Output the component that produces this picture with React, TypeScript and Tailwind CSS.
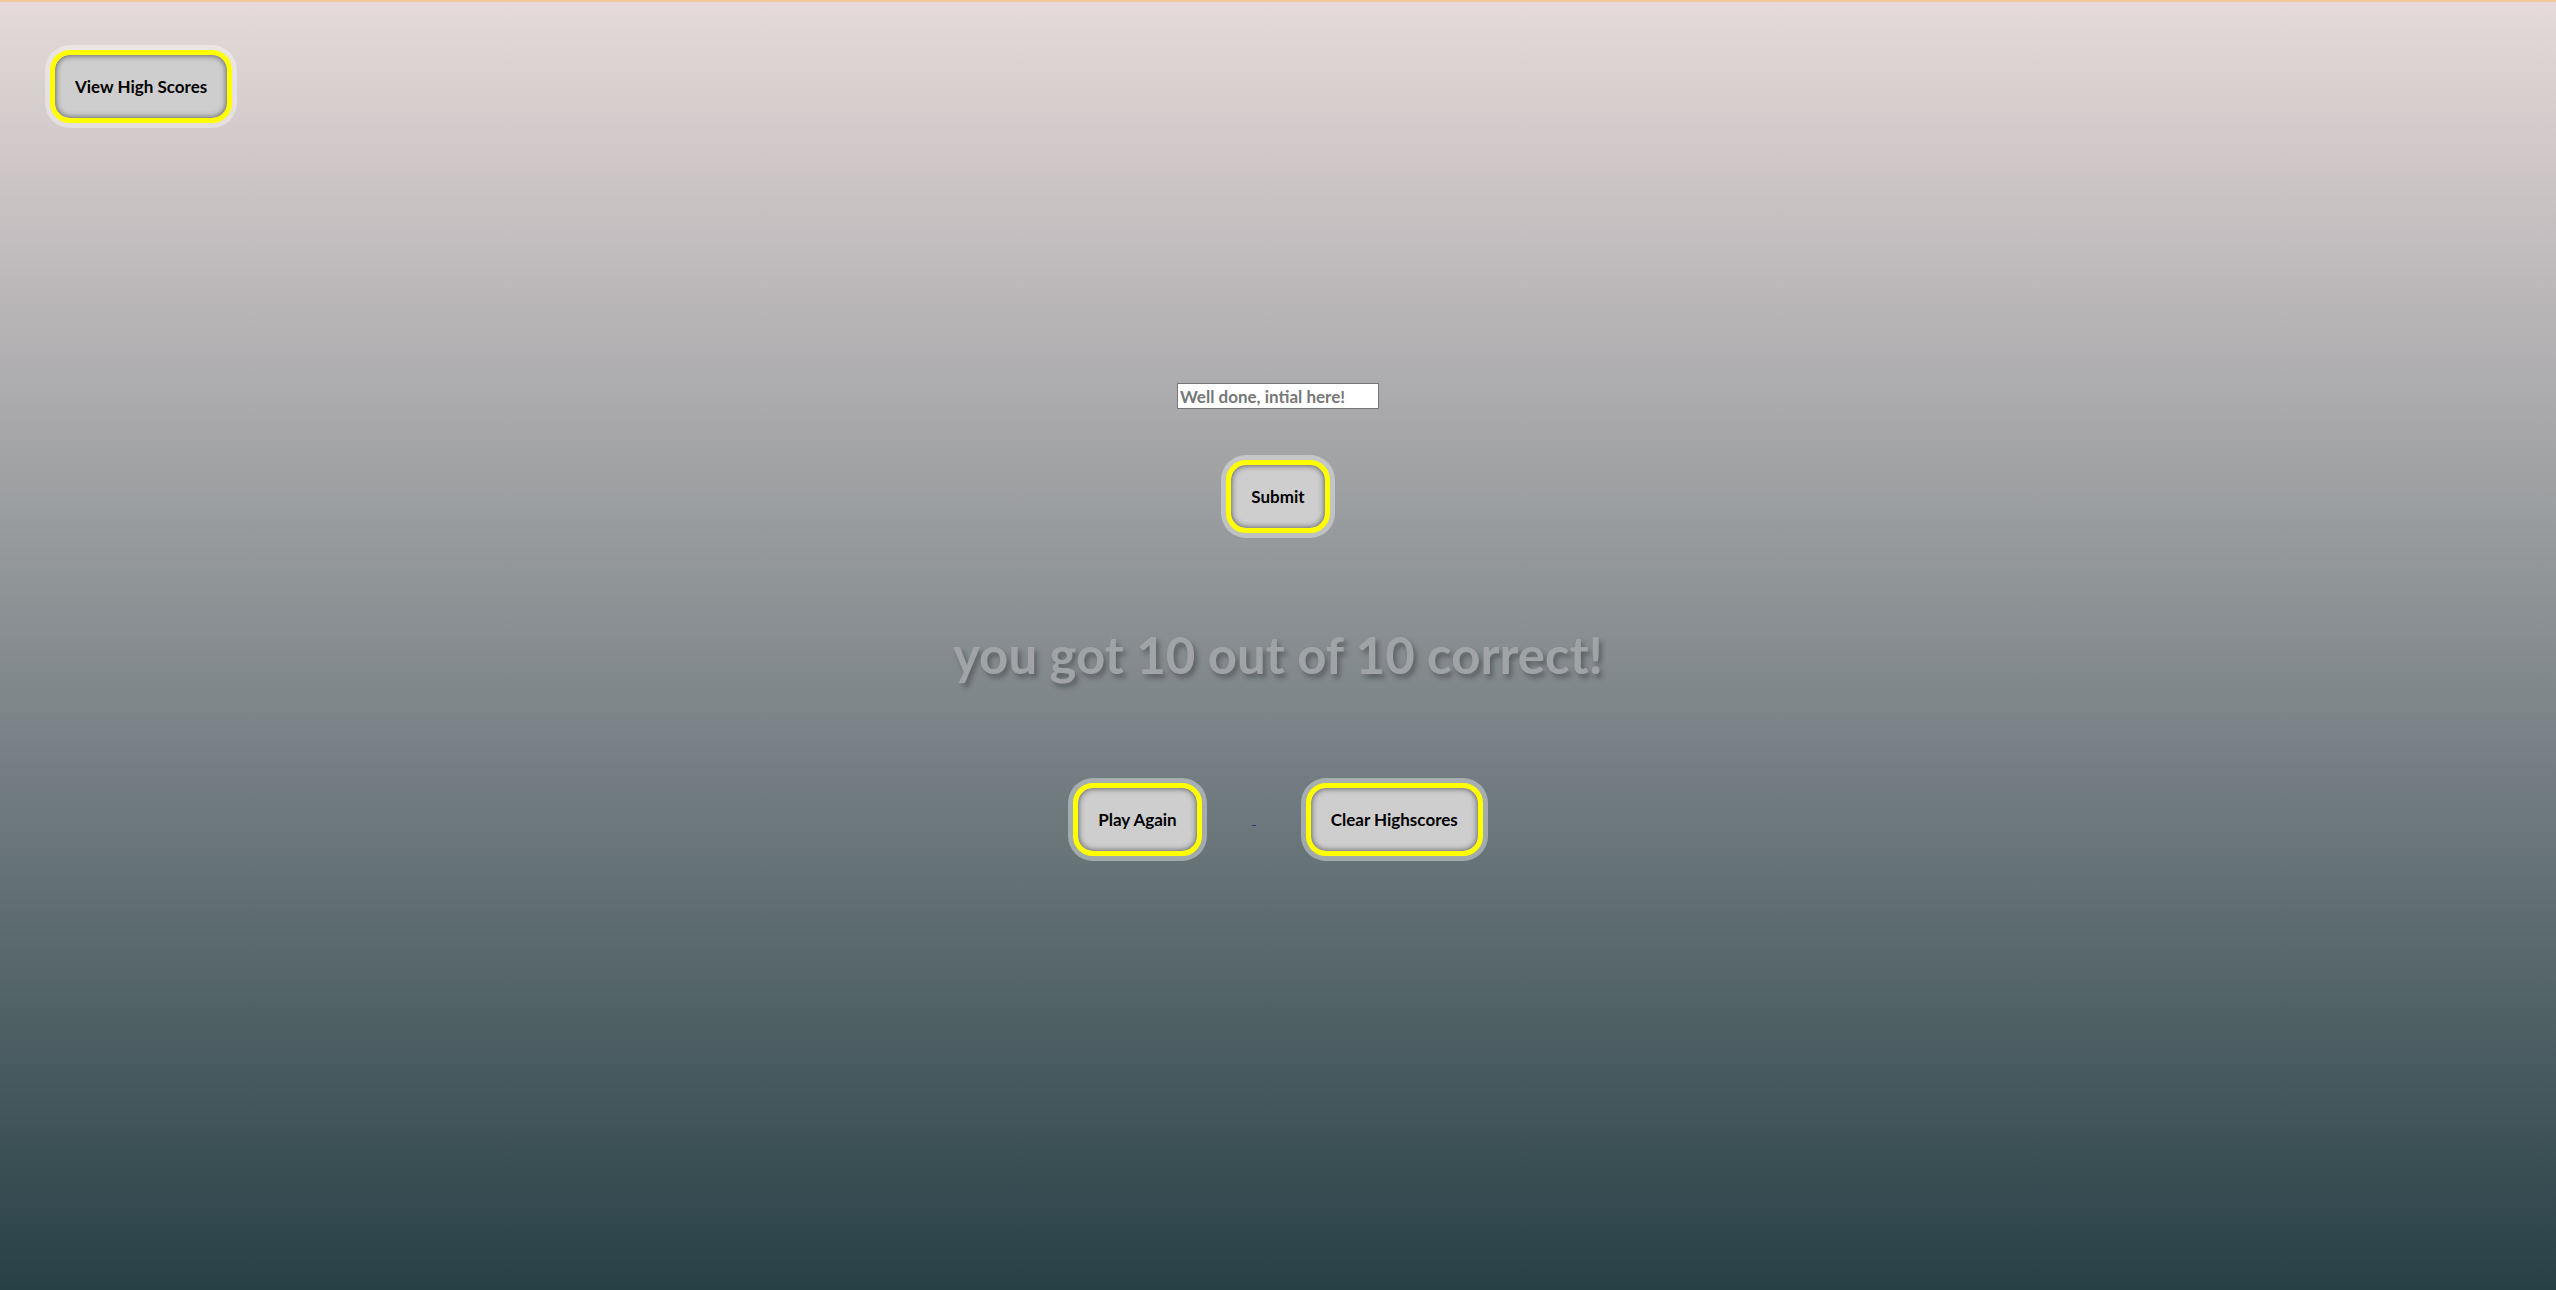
import React from 'react';

/**
 * Quiz result screen
 * Score summary with initials form and action buttons
 */
function GlowButton({ children }: { children: React.ReactNode }) {
  return (
    <button className="h-[73px] rounded-[20px] border-[5px] border-[#ffff00] bg-[#cecece] px-5 text-[17px] font-bold text-black shadow-[0_0_0_5px_rgba(255,255,255,0.38),inset_0_0_6px_rgba(0,0,0,0.65)]">
      {children}
    </button>
  );
}

export default function App() {
  return (
    <div className="min-h-screen border-t-2 border-[#f5c89c] bg-[linear-gradient(to_bottom,#e6dada,#274046)] font-['Lato','Open_Sans',sans-serif]">
      {/* Top bar */}
      <div className="pl-[50px] pt-[48px]">
        <GlowButton>View High Scores</GlowButton>
      </div>

      {/* Result */}
      <div className="flex flex-col items-center">
        <input
          type="text"
          placeholder="Well done, intial here!"
          className="mt-[260px] h-[26px] w-[202px] border border-[#767676] bg-white px-[2px] text-[17px] font-bold text-black placeholder:text-[#777777] focus:outline-none"
        />

        <div className="mt-[51px]">
          <GlowButton>Submit</GlowButton>
        </div>

        <h1 className="mt-[96px] text-[51px] font-bold leading-none text-[#a1a4a7] [text-shadow:3px_4px_5px_rgba(0,0,0,0.3)]">
          you got 10 out of 10 correct!
        </h1>

        {/* Actions */}
        <div className="mt-[103px] flex items-start">
          <GlowButton>Play Again</GlowButton>
          <span className="mx-[50px] mt-[42px] h-px w-[4px] bg-[#3a2d86]" />
          <GlowButton>Clear Highscores</GlowButton>
        </div>
      </div>
    </div>
  );
}
